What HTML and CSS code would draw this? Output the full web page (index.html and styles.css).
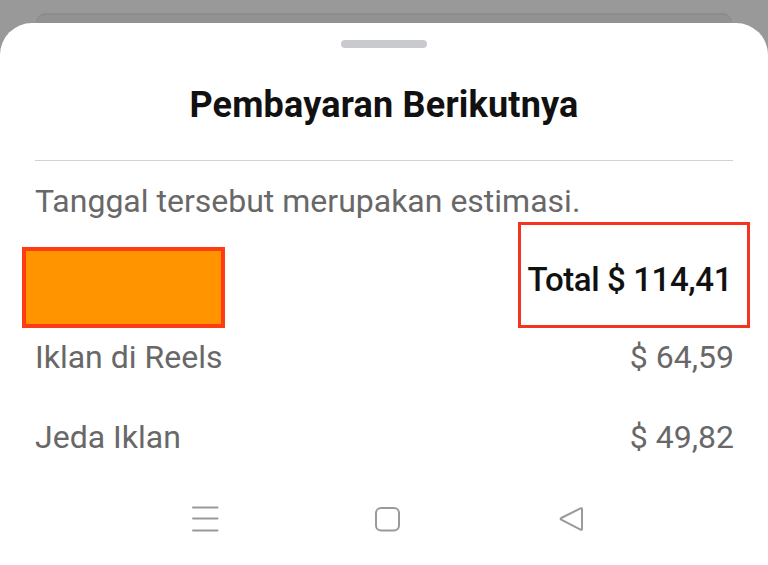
FILE: index.html
```html
<!DOCTYPE html>
<html>
<head>
<meta charset="utf-8">
<link rel="stylesheet" href="styles.css">
</head>
<body>
<div class="backcard"></div>
<div class="sheet">
  <div class="handle"></div>
  <h1 class="title">Pembayaran Berikutnya</h1>
  <div class="divider"></div>
  <p class="note">Tanggal tersebut merupakan estimasi.</p>
  <div class="row row-total">
    <div class="redacted"></div>
    <div class="total-box">Total $ 114,41</div>
  </div>
  <div class="row line">
    <span>Iklan di Reels</span>
    <span>$ 64,59</span>
  </div>
  <div class="row line">
    <span>Jeda Iklan</span>
    <span>$ 49,82</span>
  </div>
  <nav class="navbar">
    <svg class="nav-icon" width="28" height="28" viewBox="0 0 28 28">
      <path d="M2 2.5H26.5M2 13.5H26.5M2 25.5H26.5" stroke="#9a9a9a" stroke-width="2" stroke-linecap="round" fill="none"/>
    </svg>
    <svg class="nav-icon" width="28" height="28" viewBox="0 0 28 28">
      <rect x="2" y="3" width="23" height="22.5" rx="5" stroke="#9a9a9a" stroke-width="2" fill="none"/>
    </svg>
    <svg class="nav-icon" width="28" height="28" viewBox="0 0 28 28">
      <path d="M25 4.3V23.7Q25 25.4 23.5 24.6L4.2 14.6Q3 13.8 4.2 13L23.5 3.4Q25 2.6 25 4.3Z" stroke="#9a9a9a" stroke-width="2" stroke-linejoin="round" fill="none"/>
    </svg>
  </nav>
</div>
</body>
</html>
```
FILE: styles.css
```css
html, body {
  margin: 0;
  padding: 0;
}
body {
  background: #999999;
  height: 565px;
  overflow: hidden;
  font-family: Roboto, "Liberation Sans", sans-serif;
}
.backcard {
  margin: 13px 36px 0;
  height: 10px;
  background: #929292;
  border-radius: 16px 16px 0 0;
  box-shadow: inset 0 2px 0 #8c8c8c;
}
.sheet {
  background: #ffffff;
  border-radius: 32px 32px 0 0;
  height: 542px;
  display: flex;
  flex-direction: column;
}
.handle {
  align-self: center;
  width: 86px;
  height: 8px;
  border-radius: 4px;
  background: #c9cacd;
  margin-top: 17px;
}
.title {
  margin: 35px 0 0;
  text-align: center;
  font-size: 36px;
  font-weight: 700;
  line-height: 44px;
  color: #111111;
  letter-spacing: 0.2px;
}
.divider {
  margin: 33px 35px 0;
  height: 1px;
  background: #d2d2d2;
}
.note {
  margin: 20px 35px 0;
  font-size: 32px;
  line-height: 40px;
  color: #686868;
}
.row {
  display: flex;
  justify-content: space-between;
  padding: 0 35px;
}
.row-total {
  align-items: flex-end;
  margin-top: 1px;
}
.redacted {
  width: 195px;
  height: 73px;
  margin-left: -13px;
  background: #ff9300;
  border: 4px solid #ff3b14;
}
.total-box {
  width: 211px;
  height: 91px;
  margin-right: -17px;
  padding: 9px 15px 0 0;
  border: 3px solid #f5341f;
  display: flex;
  align-items: center;
  justify-content: flex-end;
  font-size: 33px;
  font-weight: 500;
  color: #111111;
  letter-spacing: -0.4px;
}
.line {
  font-size: 32px;
  line-height: 40px;
  color: #686868;
}
.line span:last-child {
  margin-right: -1px;
}
.row-total + .line {
  margin-top: 9px;
}
.line + .line {
  margin-top: 40px;
}
.navbar {
  display: flex;
  justify-content: center;
  gap: 155px;
  padding-left: 8px;
  margin-top: 48px;
}
.nav-icon {
  display: block;
}
```
